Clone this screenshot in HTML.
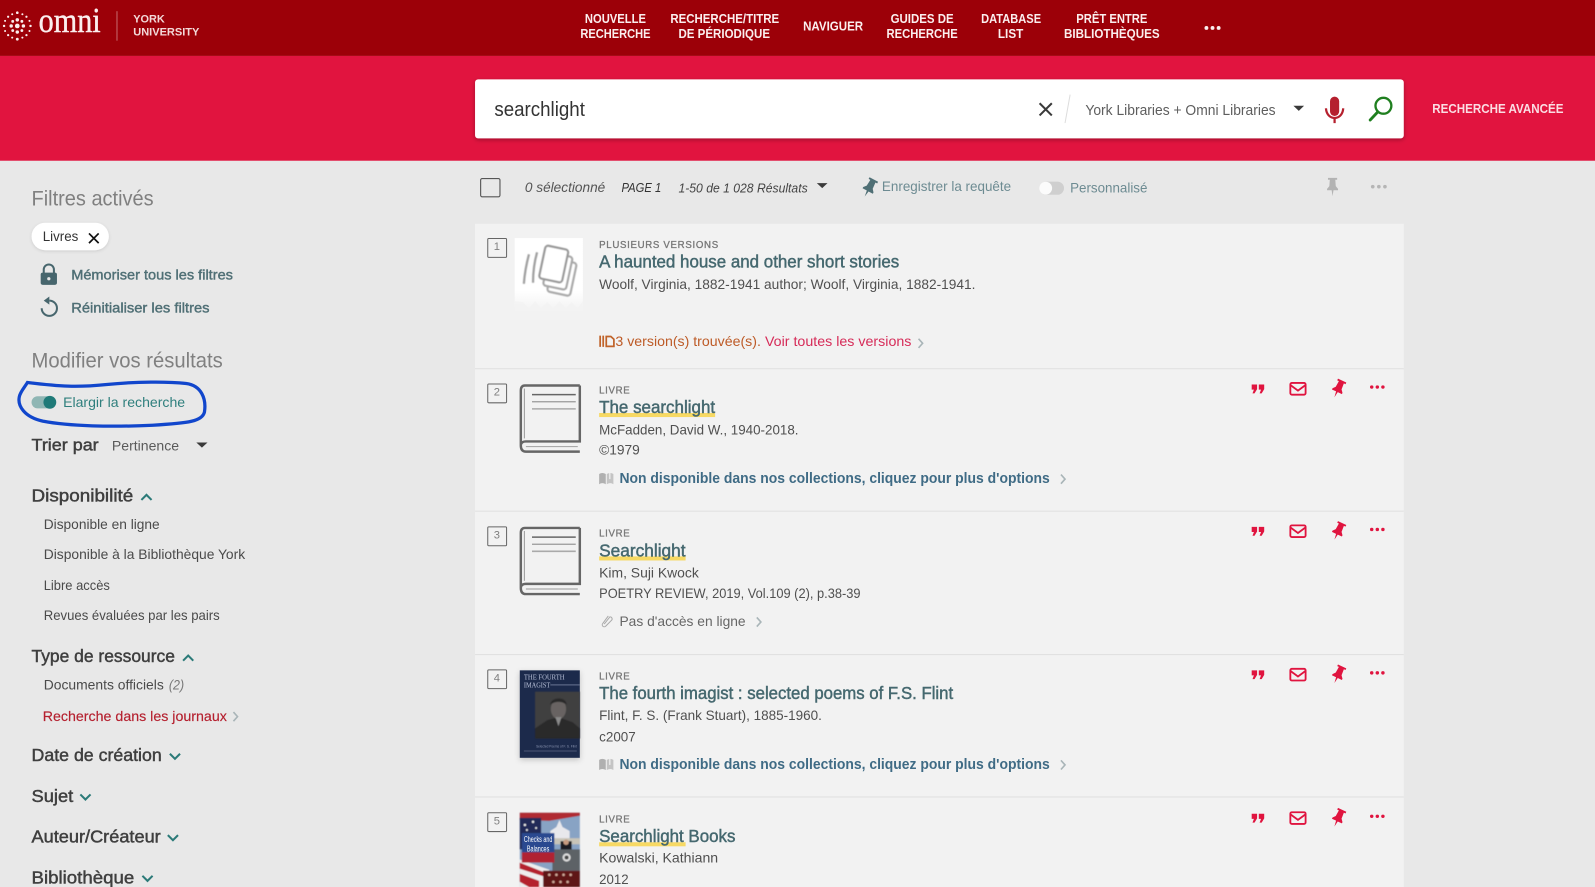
<!DOCTYPE html>
<html lang="fr">
<head>
<meta charset="utf-8">
<title>omni - searchlight</title>
<style>
html,body{margin:0;padding:0;background:#e8e8e8;width:1595px;height:887px;overflow:hidden}
svg{display:block}
text{font-family:"Liberation Sans",sans-serif;white-space:pre}
.nav{font-size:13px;font-weight:bold;fill:#fbeeee}
.h2{font-size:21px;fill:#808080}
.fh{font-size:17px;fill:#3f3f3f;stroke:#3f3f3f;stroke-width:.45}
.fi{font-size:13.5px;fill:#4a4a4a}
.lnk{font-size:14px;fill:#4f6f75;stroke:#4f6f75;stroke-width:.4}
.tb{font-size:14px;fill:#555;font-style:italic}
.tl{font-size:13.5px;fill:#6d8b92}
.ty{font-size:9.5px;fill:#777;stroke:#777;stroke-width:.3}
.t{font-size:17px;fill:#45686f;stroke:#45686f;stroke-width:.45}
.a{font-size:14px;fill:#505050}
.av{font-size:14.5px;font-weight:bold;fill:#3f6b85}
.n{font-size:11px;fill:#808080;text-anchor:middle}
.ch{fill:none;stroke:#2b7a78;stroke-width:2}
.cg{fill:none;stroke:#a9b5b8;stroke-width:1.6}
.nb{fill:none;stroke:#666;stroke-width:1;}
.ul{fill:#f7d964}
</style>
</head>
<body>
<svg xmlns="http://www.w3.org/2000/svg" width="1595" height="887" viewBox="0 0 1568 872" preserveAspectRatio="none">
<defs>
  <filter id="sh" x="-5%" y="-20%" width="110%" height="150%"><feDropShadow dx="0" dy="1.5" stdDeviation="2" flood-color="#000" flood-opacity=".3"/></filter>
  <filter id="sh2" x="-20%" y="-30%" width="140%" height="170%"><feDropShadow dx="0" dy="1" stdDeviation="1.5" flood-color="#000" flood-opacity=".12"/></filter>
  <filter id="sh3" x="-20%" y="-20%" width="140%" height="140%"><feDropShadow dx="0" dy="2" stdDeviation="3" flood-color="#000" flood-opacity=".2"/></filter>
  <filter id="soft" x="-5%" y="-5%" width="110%" height="110%"><feGaussianBlur stdDeviation=".6"/></filter>
  <linearGradient id="fade" x1="0" y1="0" x2="0" y2="1"><stop offset="0" stop-color="#fff"/><stop offset=".72" stop-color="#fff"/><stop offset="1" stop-color="#f2f2f2"/></linearGradient>
  <path id="pin" d="M-5-9H5V-7H3L3.5 0 6 3V4.5H1L0 11-1 4.5H-6V3L-3.5 0-3-7H-5Z"/>
  <g id="acts">
    <g transform="translate(1237 1)" fill="#e0143f"><path d="M-6.500-4h5.300v4.500l-2.500 4.200h-2l1.400-3.700h-2.200z"/><path d="M.5-4h5.300v4.500l-2.500 4.200h-2l1.400-3.700h-2.200z"/></g>
    <g transform="translate(1276 1)" fill="none" stroke="#e0143f" stroke-width="1.800"><rect x="-7.500" y="-5.500" width="15" height="11.500" rx="1.500"/><path d="M-7.500-3.500 0 2 7.500-3.500"/></g>
    <use href="#pin" transform="translate(1316 0.500) rotate(25) scale(.9)" fill="#e0143f"/>
    <g fill="#e0143f"><circle cx="1348.500" cy="-.5" r="1.700"/><circle cx="1354" cy="-.5" r="1.700"/><circle cx="1359.500" cy="-.5" r="1.700"/></g>
  </g>
  <g id="book">
    <path d="M59 1H5Q1 1 1 6V60Q1 66 6 66H59M59 1V56H6Q1 56 1 60" fill="none" stroke="#666" stroke-width="2.400"/>
    <path d="M4.500 4V53" stroke="#999" stroke-width="1"/>
    <path d="M6 61H57" stroke="#aaa" stroke-width="1.200"/>
    <path d="M12 10H55" stroke="#666" stroke-width="1.500"/>
    <path d="M12 17H55" stroke="#999" stroke-width="1.200"/>
    <path d="M12 24H55" stroke="#aaa" stroke-width="1.500"/>
  </g>
  <g id="nodispo">
    <path d="M0 3Q3 1 6.500 3V13Q3 11 0 13Z" fill="#b0b0b0"/><path d="M7.500 3Q11 1 14 3V13Q11 11 7.500 13Z" fill="#c4c4c4"/><path d="M10.500 0V8" stroke="#f2f2f2" stroke-width="1.200"/>
  </g>
</defs>

<rect width="1568" height="872" fill="#e8e8e8"/>

<!-- top bar -->
<rect width="1568" height="55" fill="#9c0008"/>
<g fill="#fbeeee">
  <circle cx="17" cy="25.500" r="2.300"/><circle cx="17" cy="19.500" r="1.700"/><circle cx="17" cy="31.500" r="1.700"/><circle cx="11" cy="25.500" r="1.700"/><circle cx="23" cy="25.500" r="1.700"/>
  <circle cx="12.500" cy="21" r="1.400"/><circle cx="21.500" cy="21" r="1.400"/><circle cx="12.500" cy="30" r="1.400"/><circle cx="21.500" cy="30" r="1.400"/>
  <circle cx="17" cy="12.500" r="1.300"/><circle cx="17" cy="38.500" r="1.400"/><circle cx="4" cy="25.500" r="1.200"/><circle cx="30" cy="25.500" r="1.200"/>
  <circle cx="8" cy="16.500" r="1.100"/><circle cx="26" cy="16.500" r="1.100"/><circle cx="8" cy="34.500" r="1.100"/><circle cx="26" cy="34.500" r="1.100"/>
  <circle cx="12" cy="14" r="1"/><circle cx="22" cy="14" r="1"/><circle cx="12" cy="37" r="1"/><circle cx="22" cy="37" r="1"/>
  <circle cx="5" cy="20.500" r="1"/><circle cx="29" cy="20.500" r="1"/><circle cx="5" cy="30.500" r="1"/><circle cx="29" cy="30.500" r="1"/>
</g>
<text x="38" y="31.500" textLength="61" lengthAdjust="spacingAndGlyphs" style="font-family:'Liberation Serif',serif;font-size:34px;fill:#fbeeee;stroke:#fbeeee;stroke-width:.4">omni</text>
<rect x="114.500" y="11" width="1" height="29" fill="#c56a6f"/>
<text x="131" y="22" textLength="31" lengthAdjust="spacingAndGlyphs" style="font-size:11px;font-weight:bold;fill:#f3d9d9">YORK</text>
<text x="131" y="35" textLength="65" lengthAdjust="spacingAndGlyphs" style="font-size:11px;font-weight:bold;fill:#f3d9d9">UNIVERSITY</text>

<text class="nav" x="575" y="22.700" textLength="60" lengthAdjust="spacingAndGlyphs">NOUVELLE</text>
<text class="nav" x="570.500" y="37.300" textLength="69" lengthAdjust="spacingAndGlyphs">RECHERCHE</text>
<text class="nav" x="659" y="22.700" textLength="107" lengthAdjust="spacingAndGlyphs">RECHERCHE/TITRE</text>
<text class="nav" x="667" y="37.300" textLength="90" lengthAdjust="spacingAndGlyphs">DE PÉRIODIQUE</text>
<text class="nav" x="789.500" y="30" textLength="59" lengthAdjust="spacingAndGlyphs">NAVIGUER</text>
<text class="nav" x="875.500" y="22.700" textLength="62" lengthAdjust="spacingAndGlyphs">GUIDES DE</text>
<text class="nav" x="871.500" y="37.300" textLength="70" lengthAdjust="spacingAndGlyphs">RECHERCHE</text>
<text class="nav" x="964.500" y="22.700" textLength="59" lengthAdjust="spacingAndGlyphs">DATABASE</text>
<text class="nav" x="981" y="37.300" textLength="25" lengthAdjust="spacingAndGlyphs">LIST</text>
<text class="nav" x="1058" y="22.700" textLength="70" lengthAdjust="spacingAndGlyphs">PRÊT ENTRE</text>
<text class="nav" x="1046" y="37.300" textLength="94" lengthAdjust="spacingAndGlyphs">BIBLIOTHÈQUES</text>
<g fill="#fbeeee"><circle cx="1186" cy="27.500" r="1.900"/><circle cx="1192" cy="27.500" r="1.900"/><circle cx="1198" cy="27.500" r="1.900"/></g>

<!-- search band -->
<rect y="55" width="1568" height="103" fill="#e1143f"/>
<rect x="467" y="78" width="913" height="58" rx="3" fill="#fff" filter="url(#sh)"/>
<text x="486" y="114" textLength="89" lengthAdjust="spacingAndGlyphs" style="font-size:20px;fill:#333">searchlight</text>
<path d="M1022 101.500 1034 113.500M1034 101.500 1022 113.500" stroke="#3a3a3a" stroke-width="2" fill="none"/>
<path d="M1052 93 1047 121" stroke="#ddd" stroke-width="1"/>
<text x="1067" y="113" textLength="187" lengthAdjust="spacingAndGlyphs" style="font-size:14.500px;fill:#5e5e5e">York Libraries + Omni Libraries</text>
<path d="M1271.500 104H1282L1276.800 109Z" fill="#3a3a3a"/>
<rect x="1307.500" y="95" width="9" height="19" rx="4.500" fill="#b5202e"/>
<path d="M1303.500 106.500C1304 113 1308 116 1312 116S1320 113 1320.500 106.500M1312 116V121" fill="none" stroke="#b5202e" stroke-width="2.200"/>
<circle cx="1360" cy="104" r="7.800" fill="none" stroke="#1f7f1f" stroke-width="2.300"/>
<path d="M1354.500 110 1347 118" stroke="#1f7f1f" stroke-width="2.800" stroke-linecap="round"/>
<text x="1408" y="111" textLength="129" lengthAdjust="spacingAndGlyphs" style="font-size:13px;font-weight:bold;fill:#fbdde3">RECHERCHE AVANCÉE</text>

<!-- sidebar -->
<text class="h2" x="31" y="202" textLength="120" lengthAdjust="spacingAndGlyphs">Filtres activés</text>
<rect x="31" y="219" width="76" height="27" rx="13.500" fill="#fff" filter="url(#sh2)"/>
<text x="42" y="237" textLength="35" lengthAdjust="spacingAndGlyphs" style="font-size:13.500px;fill:#333">Livres</text>
<path d="M87.500 229.500 97 239M97 229.500 87.500 239" stroke="#111" stroke-width="1.700" fill="none"/>

<g fill="#47666d">
  <rect x="40" y="268" width="16" height="12" rx="2"/>
  <path d="M43 268.500V265a5 5 0 0 1 10 0V268.500" fill="none" stroke="#47666d" stroke-width="2"/>
</g>
<circle cx="48" cy="274" r="1.600" fill="#e8e8e8"/>
<text class="lnk" x="70" y="275" textLength="159" lengthAdjust="spacingAndGlyphs">Mémoriser tous les filtres</text>
<path d="M48.500 295.500A7.500 7.500 0 1 1 41 303" fill="none" stroke="#47666d" stroke-width="2"/>
<path d="M48.500 291.500V299.500L43 295.500Z" fill="#47666d"/>
<text class="lnk" x="70" y="307" textLength="136" lengthAdjust="spacingAndGlyphs">Réinitialiser les filtres</text>

<text class="h2" x="31" y="361.500" textLength="188" lengthAdjust="spacingAndGlyphs">Modifier vos résultats</text>

<path d="M27 376C60 380 75 381 105 378C135 375 165 375 183 377C198 379 203 392 201 405C199 414 186 416 150 418C110 420 68 419 42 414C24 410 17 399 19 390C20 385 24 381 27 376Z" fill="none" stroke="#1146cc" stroke-width="3.200"/>
<rect x="31" y="389.500" width="24" height="12" rx="6" fill="#8fb6b4"/>
<circle cx="49" cy="395.500" r="6.300" fill="#1f7a78"/>
<text x="62" y="400" textLength="120" lengthAdjust="spacingAndGlyphs" style="font-size:14px;fill:#2f7f7d">Elargir la recherche</text>

<text class="fh" x="31" y="443" textLength="66" lengthAdjust="spacingAndGlyphs" style="font-size:16.500px">Trier par</text>
<text x="110" y="443" textLength="66" lengthAdjust="spacingAndGlyphs" style="font-size:13.500px;fill:#5a5a5a">Pertinence</text>
<path d="M193 435H204L198.500 440Z" fill="#3a3a3a"/>

<text class="fh" x="31" y="493" textLength="100" lengthAdjust="spacingAndGlyphs">Disponibilité</text>
<path class="ch" d="M139 491.500 144 486.500 149 491.500"/>
<text class="fi" x="43" y="520" textLength="114" lengthAdjust="spacingAndGlyphs">Disponible en ligne</text>
<text class="fi" x="43" y="549.500" textLength="198" lengthAdjust="spacingAndGlyphs">Disponible à la Bibliothèque York</text>
<text class="fi" x="43" y="580" textLength="65" lengthAdjust="spacingAndGlyphs">Libre accès</text>
<text class="fi" x="43" y="609.500" textLength="173" lengthAdjust="spacingAndGlyphs">Revues évaluées par les pairs</text>
<text class="fh" x="31" y="651" textLength="141" lengthAdjust="spacingAndGlyphs">Type de ressource</text>
<path class="ch" d="M180 649.500 185 644.500 190 649.500"/>
<text class="fi" x="43" y="678" textLength="118" lengthAdjust="spacingAndGlyphs">Documents officiels</text>
<text x="166" y="678" textLength="15" lengthAdjust="spacingAndGlyphs" style="font-size:13.500px;font-style:italic;fill:#777">(2)</text>
<text class="fi" x="42" y="709" textLength="181" lengthAdjust="spacingAndGlyphs" style="fill:#b5202f;stroke:#b5202f;stroke-width:.15">Recherche dans les journaux</text>
<path class="cg" d="M229.500 700 233.500 704.500 229.500 709"/>
<text class="fh" x="31" y="748" textLength="128" lengthAdjust="spacingAndGlyphs">Date de création</text>
<path class="ch" d="M167 741 172 746 177 741"/>
<text class="fh" x="31" y="788.500" textLength="41" lengthAdjust="spacingAndGlyphs">Sujet</text>
<path class="ch" d="M79 781 84 786 89 781"/>
<text class="fh" x="31" y="828.500" textLength="127" lengthAdjust="spacingAndGlyphs">Auteur/Créateur</text>
<path class="ch" d="M165 821 170 826 175 821"/>
<text class="fh" x="31" y="868.500" textLength="101" lengthAdjust="spacingAndGlyphs">Bibliothèque</text>
<path class="ch" d="M140 861 145 866 150 861"/>

<!-- toolbar -->
<rect x="472.500" y="175.500" width="19" height="18" rx="1.500" fill="none" stroke="#555" stroke-width="1.100"/>
<text class="tb" x="516" y="189" textLength="79" lengthAdjust="spacingAndGlyphs">0 sélectionné</text>
<text class="tb" x="611" y="189" textLength="39" lengthAdjust="spacingAndGlyphs" style="font-size:12.500px;fill:#333">PAGE 1</text>
<text class="tb" x="667" y="189.500" textLength="127" lengthAdjust="spacingAndGlyphs" style="font-size:13px;fill:#444">1-50 de 1 028 Résultats</text>
<path d="M803 180H813.500L808.300 185Z" fill="#3a3a3a"/>
<use href="#pin" transform="translate(855 184) rotate(28) scale(.95)" fill="#4f6f75"/>
<text class="tl" x="867" y="188" textLength="127" lengthAdjust="spacingAndGlyphs">Enregistrer la requête</text>
<rect x="1022" y="178.500" width="24" height="13" rx="6.500" fill="#cfcfcf"/>
<circle cx="1028" cy="185" r="6.300" fill="#fbfbfb"/>
<text class="tl" x="1052" y="189.500" textLength="76" lengthAdjust="spacingAndGlyphs">Personnalisé</text>
<use href="#pin" transform="translate(1310 183) scale(.9)" fill="#b3b3b3"/>
<g fill="#b5b5b5"><circle cx="1349.500" cy="183.500" r="1.800"/><circle cx="1355.500" cy="183.500" r="1.800"/><circle cx="1361.500" cy="183.500" r="1.800"/></g>

<!-- results -->
<rect x="467" y="220" width="913" height="652" fill="#f2f2f2"/>
<g fill="#e0e0e0">
  <rect x="467" y="362" width="913" height="1"/><rect x="467" y="502" width="913" height="1"/><rect x="467" y="643" width="913" height="1"/><rect x="467" y="783" width="913" height="1"/>
</g>

<!-- result 1 -->
<rect class="nb" x="479.500" y="234.500" width="18.500" height="18.500" rx="1"/><text class="n" x="488.500" y="246">1</text>
<rect x="506" y="234" width="67" height="72" fill="url(#fade)"/>
<path d="M506 296V306H573V296L568 303 562 297 556 303 550 296 544 303 538 297 532 303 526 296 520 303 514 297Z" fill="#f2f2f2" opacity=".8"/>
<g fill="none" stroke="#a0a0a0" stroke-width="2.200" filter="url(#soft)">
  <path d="M520 250Q516 265 515 279"/><path d="M528 248Q524 262 524 278"/>
  <rect x="541" y="256" width="23" height="33" rx="3" transform="rotate(12 552 272)" fill="#fff" stroke="#aaa"/>
  <rect x="537" y="250" width="23" height="33" rx="3" transform="rotate(12 548 266)" fill="#fff" stroke="#a8a8a8"/>
  <rect x="533" y="243" width="23" height="33" rx="3" transform="rotate(12 544 259)" fill="#fff" stroke="#999"/>
</g>
<text class="ty" x="589" y="244" textLength="117" lengthAdjust="spacing">PLUSIEURS VERSIONS</text>
<text class="t" x="589" y="263" textLength="295" lengthAdjust="spacingAndGlyphs">A haunted house and other short stories</text>
<text class="a" x="589" y="284" textLength="370" lengthAdjust="spacingAndGlyphs">Woolf, Virginia, 1882-1941 author; Woolf, Virginia, 1882-1941.</text>
<path d="M590 330V341M593 330V341M596 330.800H600.500L603.500 333.500V340.500H596Z" fill="none" stroke="#c0632a" stroke-width="1.700"/>
<text class="a" x="605" y="340" textLength="143" lengthAdjust="spacingAndGlyphs" style="fill:#bd5a26">3 version(s) trouvée(s).</text>
<text class="a" x="752" y="340" textLength="144" lengthAdjust="spacingAndGlyphs" style="fill:#d62b58">Voir toutes les versions</text>
<path class="cg" d="M903 333 907 337.500 903 342"/>

<!-- result 2 -->
<rect class="nb" x="479.500" y="377.500" width="18.500" height="18.500" rx="1"/><text class="n" x="488.500" y="389">2</text>
<use href="#book" transform="translate(511 378)"/>
<text class="ty" x="589" y="387" textLength="30" lengthAdjust="spacing">LIVRE</text>
<rect class="ul" x="589" y="406" width="114" height="4"/>
<text class="t" x="589" y="406" textLength="114" lengthAdjust="spacingAndGlyphs">The searchlight</text>
<text class="a" x="589" y="427" textLength="196" lengthAdjust="spacingAndGlyphs">McFadden, David W., 1940-2018.</text>
<text class="a" x="589" y="447" textLength="40" lengthAdjust="spacingAndGlyphs">©1979</text>
<use href="#nodispo" transform="translate(589 463)"/>
<text class="av" x="609" y="475" textLength="423" lengthAdjust="spacingAndGlyphs">Non disponible dans nos collections, cliquez pour plus d'options</text>
<path class="cg" d="M1043 466.500 1047 471 1043 475.500"/>
<use href="#acts" transform="translate(0 381)"/>

<!-- result 3 -->
<rect class="nb" x="479.500" y="518" width="18.500" height="18.500" rx="1"/><text class="n" x="488.500" y="529.500">3</text>
<use href="#book" transform="translate(511 518)"/>
<text class="ty" x="589" y="527.500" textLength="30" lengthAdjust="spacing">LIVRE</text>
<rect class="ul" x="589" y="547" width="85" height="4"/>
<text class="t" x="589" y="547" textLength="85" lengthAdjust="spacingAndGlyphs">Searchlight</text>
<text class="a" x="589" y="567.500" textLength="98" lengthAdjust="spacingAndGlyphs">Kim, Suji Kwock</text>
<text class="a" x="589" y="588" textLength="257" lengthAdjust="spacingAndGlyphs">POETRY REVIEW, 2019, Vol.109 (2), p.38-39</text>
<path d="M594 613.500 599.500 606.500A2 2 0 0 1 601.500 609.500L595.500 615.500A1.500 1.500 0 0 1 592.500 613L598 605.500" fill="none" stroke="#aaa" stroke-width="1"/>
<text class="a" x="609" y="615.500" textLength="124" lengthAdjust="spacingAndGlyphs" style="fill:#666">Pas d'accès en ligne</text>
<path class="cg" d="M744 607 748 611.500 744 616"/>
<use href="#acts" transform="translate(0 521)"/>

<!-- result 4 -->
<rect class="nb" x="479.500" y="658.500" width="18.500" height="18.500" rx="1"/><text class="n" x="488.500" y="670">4</text>
<g filter="url(#sh3)"><rect x="511" y="659" width="59" height="86" fill="#1e2a4c"/></g>
<g filter="url(#soft)">
<rect x="526" y="680" width="44" height="46" fill="#413f40"/>
<path d="M526 726V716L538 708 549 705 563 710 570 716V726Z" fill="#2a2a2c"/>
<ellipse cx="549" cy="697" rx="7.500" ry="10" fill="#676462"/>
<path d="M541 693C541 685 557 684 557 693 553 689 545 689 541 693Z" fill="#2a2a2a"/>
<path d="M546 705 549 714 552 705Z" fill="#8a8a8a"/>
</g>
<text x="515" y="668" textLength="40" lengthAdjust="spacingAndGlyphs" style="font-family:'Liberation Serif',serif;font-size:7px;fill:#b8c0d8">THE FOURTH</text>
<text x="515" y="676" textLength="26" lengthAdjust="spacingAndGlyphs" style="font-family:'Liberation Serif',serif;font-size:7px;fill:#b8c0d8">IMAGIST</text>
<rect x="541" y="673" width="29" height=".7" fill="#8a94b0"/>
<text x="527" y="735" textLength="40" lengthAdjust="spacingAndGlyphs" style="font-size:3.500px;fill:#8a94b0">Selected Poems of F. S. Flint</text>
<rect x="515" y="738" width="52" height=".6" fill="#6a7490"/>
<text class="ty" x="589" y="668" textLength="30" lengthAdjust="spacing">LIVRE</text>
<text class="t" x="589" y="687" textLength="348" lengthAdjust="spacingAndGlyphs">The fourth imagist : selected poems of F.S. Flint</text>
<text class="a" x="589" y="708" textLength="219" lengthAdjust="spacingAndGlyphs">Flint, F. S. (Frank Stuart), 1885-1960.</text>
<text class="a" x="589" y="729" textLength="36" lengthAdjust="spacingAndGlyphs">c2007</text>
<use href="#nodispo" transform="translate(589 744)"/>
<text class="av" x="609" y="756" textLength="423" lengthAdjust="spacingAndGlyphs">Non disponible dans nos collections, cliquez pour plus d'options</text>
<path class="cg" d="M1043 747.500 1047 752 1043 756.500"/>
<use href="#acts" transform="translate(0 662)"/>

<!-- result 5 -->
<rect class="nb" x="479.500" y="799" width="18.500" height="18.500" rx="1"/><text class="n" x="488.500" y="810.500">5</text>
<g filter="url(#soft)">
<rect x="511" y="799" width="59" height="73" fill="#88a3c4"/>
<path d="M511 799H570V802L540 807 511 806Z" fill="#b02a30"/>
<path d="M511 804H532V835H511Z" fill="#232c58"/>
<g fill="#eee"><circle cx="516" cy="811" r="1.200"/><circle cx="524" cy="808" r="1.200"/><circle cx="518" cy="816" r="1"/><circle cx="527" cy="814" r="1"/></g>
<path d="M541 826V817L547 813 550 806 553 813 560 817V826Z" fill="#e8e8ec"/>
<rect x="535" y="824" width="35" height="6" fill="#c8c4b8"/>
<path d="M511 845 540 855V872H511Z" fill="#eee"/>
<path d="M511 848 536 858V862L511 854ZM511 859 530 866V872H520L511 867Z" fill="#b5202e"/>
<rect x="551" y="827" width="11" height="12" fill="#1a1a22"/><circle cx="556.500" cy="828" r="2.700" fill="#c79b80"/>
<rect x="543" y="835" width="27" height="21" fill="#5d6266"/><circle cx="557" cy="843" r="4" fill="#ddd"/><circle cx="557" cy="843" r="2" fill="#444"/>
<rect x="534" y="856" width="36" height="16" fill="#5e1518"/>
<g fill="#cfa898"><circle cx="540" cy="860" r="1.300"/><circle cx="547" cy="860" r="1.300"/><circle cx="554" cy="860" r="1.300"/><circle cx="561" cy="860" r="1.300"/><circle cx="544" cy="867" r="1.300"/><circle cx="551" cy="867" r="1.300"/><circle cx="558" cy="867" r="1.300"/></g>
<rect x="513" y="819" width="32" height="20" fill="#2a4a90"/>
<rect x="513" y="838" width="32" height="10" fill="#b02030"/>
</g>
<text x="515" y="828" textLength="28" lengthAdjust="spacingAndGlyphs" style="font-size:8.500px;fill:#fff">Checks and</text>
<text x="518" y="837" textLength="22" lengthAdjust="spacingAndGlyphs" style="font-size:8.500px;fill:#fff">Balances</text>
<text class="ty" x="589" y="808.500" textLength="30" lengthAdjust="spacing">LIVRE</text>
<rect class="ul" x="589" y="828" width="85" height="4"/>
<text class="t" x="589" y="828" textLength="134" lengthAdjust="spacingAndGlyphs">Searchlight Books</text>
<text class="a" x="589" y="848" textLength="117" lengthAdjust="spacingAndGlyphs">Kowalski, Kathiann</text>
<text class="a" x="589" y="869" textLength="29" lengthAdjust="spacingAndGlyphs">2012</text>
<use href="#acts" transform="translate(0 803)"/>
</svg>
</body>
</html>
